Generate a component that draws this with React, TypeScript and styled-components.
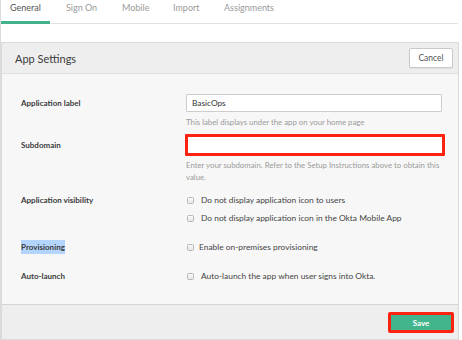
import React from "react";
import styled, { createGlobalStyle } from "styled-components";

const Global = createGlobalStyle`
  html, body { margin: 0; padding: 0; background: #ffffff; }
  body { font-family: Lato, "Open Sans", Arial, sans-serif; -webkit-font-smoothing: antialiased; }
  * { box-sizing: border-box; }
`;

const Page = styled.div`
  width: 462px;
  height: 340px;
  overflow: hidden;
  border-left: 1px solid #dcdcdc;
  display: flex;
  flex-direction: column;
`;

const TabBar = styled.div`
  display: flex;
  height: 24px;
  border-bottom: 1px solid #e3e3e3;
  margin-right: 4px;
`;

const Tab = styled.div<{ $active?: boolean; $w: number; $ml: number }>`
  width: ${(p) => p.$w}px;
  margin-left: ${(p) => p.$ml}px;
  padding-left: ${(p) => (p.$active ? 9 : 0)}px;
  font-size: 9px;
  line-height: 15px;
  white-space: nowrap;
  color: ${(p) => (p.$active ? "#555" : "#9a9a9a")};
  border-bottom: ${(p) => (p.$active ? "3px solid #42b38b" : "none")};
  margin-bottom: -1px;
`;

const Panel = styled.div`
  margin-top: 18px;
  margin-right: 3px;
  border: 1px solid #dadada;
  display: flex;
  flex-direction: column;
  height: 298px;
`;

const Header = styled.div`
  height: 31px;
  background: #eeeeee;
  border-bottom: 1px solid #dedede;
  display: flex;
  align-items: center;
  justify-content: space-between;
  padding: 0 5px 0 13px;
`;

const Title = styled.div`
  font-size: 11px;
  color: #3a3a3a;
`;

const CancelButton = styled.button`
  width: 44px;
  height: 20px;
  background: #fff;
  border: 1px solid #c9c9c9;
  border-radius: 2px;
  font-family: inherit;
  font-size: 8.5px;
  color: #555;
  padding: 0;
  box-shadow: 0 1px 1px rgba(0,0,0,0.06);
`;

const Body = styled.div`
  flex: 1;
  background: #f7f7f7;
  padding: 20px 0 0 19px;
`;

const Row = styled.div<{ $mb: number }>`
  display: grid;
  grid-template-columns: 165px 1fr;
  margin-bottom: ${(p) => p.$mb}px;
`;

const Label = styled.div<{ $lh: number }>`
  line-height: ${(p) => p.$lh}px;
  font-size: 8px;
  font-weight: 700;
  color: #3b3b3b;
`;

const Highlight = styled.span`
  background: #b3d4fc;
  padding: 2px 0;
`;

const Field = styled.div`
  display: flex;
  flex-direction: column;
`;

const TextInput = styled.div`
  width: 256px;
  height: 18px;
  background: #fff;
  border: 1px solid #cdcdcd;
  border-radius: 1px;
  font-size: 8.3px;
  color: #333;
  line-height: 16px;
  padding-left: 5px;
`;

const ErrorInput = styled.div`
  width: 260px;
  margin-left: -1px;
  height: 22px;
  background: #fff;
  border: 3px solid #fd2310;
  border-radius: 1px;
`;

const Help = styled.div<{ $mt: number }>`
  margin-top: ${(p) => p.$mt}px;
  font-size: 7.8px;
  line-height: 12px;
  color: #9b9b9b;
  width: 262px;
`;

const CheckList = styled.div`
  display: flex;
  flex-direction: column;
  gap: 6px;
`;

const CheckRow = styled.div<{ $gap: number }>`
  display: flex;
  align-items: center;
  gap: ${(p) => p.$gap}px;
  height: 12px;
  font-size: 8.4px;
  color: #444;
  white-space: nowrap;
`;

const Box = styled.span`
  width: 7px;
  height: 7px;
  flex: none;
  border: 1px solid #b8b8b8;
  border-radius: 1.5px;
  background: linear-gradient(#fafafa, #e6e6e6);
  margin-left: 1px;
`;

const Footer = styled.div`
  height: 35px;
  border-top: 1px solid #d6d6d6;
  background: #eeeeee;
  display: flex;
  align-items: center;
  justify-content: flex-end;
  padding-right: 4px;
`;

const SaveFrame = styled.div`
  border: 3px solid #fd2310;
  border-radius: 2px;
  margin-top: 1px;
`;

const SaveButton = styled.button`
  width: 60px;
  height: 15px;
  background: #43b58c;
  border: none;
  color: #fff;
  font-family: inherit;
  font-weight: 700;
  font-size: 8px;
  padding: 0;
  display: block;
`;

const tabs = [
  { t: "General", w: 49, ml: 0, a: true },
  { t: "Sign On", w: 56, ml: 16 },
  { t: "Mobile", w: 51, ml: 0 },
  { t: "Import", w: 51, ml: 0 },
  { t: "Assignments", w: 80, ml: 0 },
];

export default function App() {
  return (
    <>
      <Global />
      <Page>
        <TabBar>
          {tabs.map((t) => (
            <Tab key={t.t} $active={t.a} $w={t.w} $ml={t.ml}>
              {t.t}
            </Tab>
          ))}
        </TabBar>
        <Panel>
          <Header>
            <Title>App Settings</Title>
            <CancelButton>Cancel</CancelButton>
          </Header>
          <Body>
            <Row $mb={6}>
              <Label $lh={18}>Application label</Label>
              <Field>
                <TextInput>BasicOps</TextInput>
                <Help $mt={4}>This label displays under the app on your home page</Help>
              </Field>
            </Row>
            <Row $mb={11}>
              <Label $lh={22}>Subdomain</Label>
              <Field>
                <ErrorInput />
                <Help $mt={3}>
                  Enter your subdomain. Refer to the Setup Instructions above to obtain this value.
                </Help>
              </Field>
            </Row>
            <Row $mb={17}>
              <Label $lh={12}>Application visibility</Label>
              <CheckList>
                <CheckRow $gap={7}><Box />Do not display application icon to users</CheckRow>
                <CheckRow $gap={7}><Box />Do not display application icon in the Okta Mobile App</CheckRow>
              </CheckList>
            </Row>
            <Row $mb={17}>
              <Label $lh={12}><Highlight>Provisioning</Highlight></Label>
              <CheckList>
                <CheckRow $gap={5}><Box />Enable on-premises provisioning</CheckRow>
              </CheckList>
            </Row>
            <Row $mb={0}>
              <Label $lh={12}>Auto-launch</Label>
              <CheckList>
                <CheckRow $gap={7}><Box />Auto-launch the app when user signs into Okta.</CheckRow>
              </CheckList>
            </Row>
          </Body>
          <Footer>
            <SaveFrame>
              <SaveButton>Save</SaveButton>
            </SaveFrame>
          </Footer>
        </Panel>
      </Page>
    </>
  );
}
